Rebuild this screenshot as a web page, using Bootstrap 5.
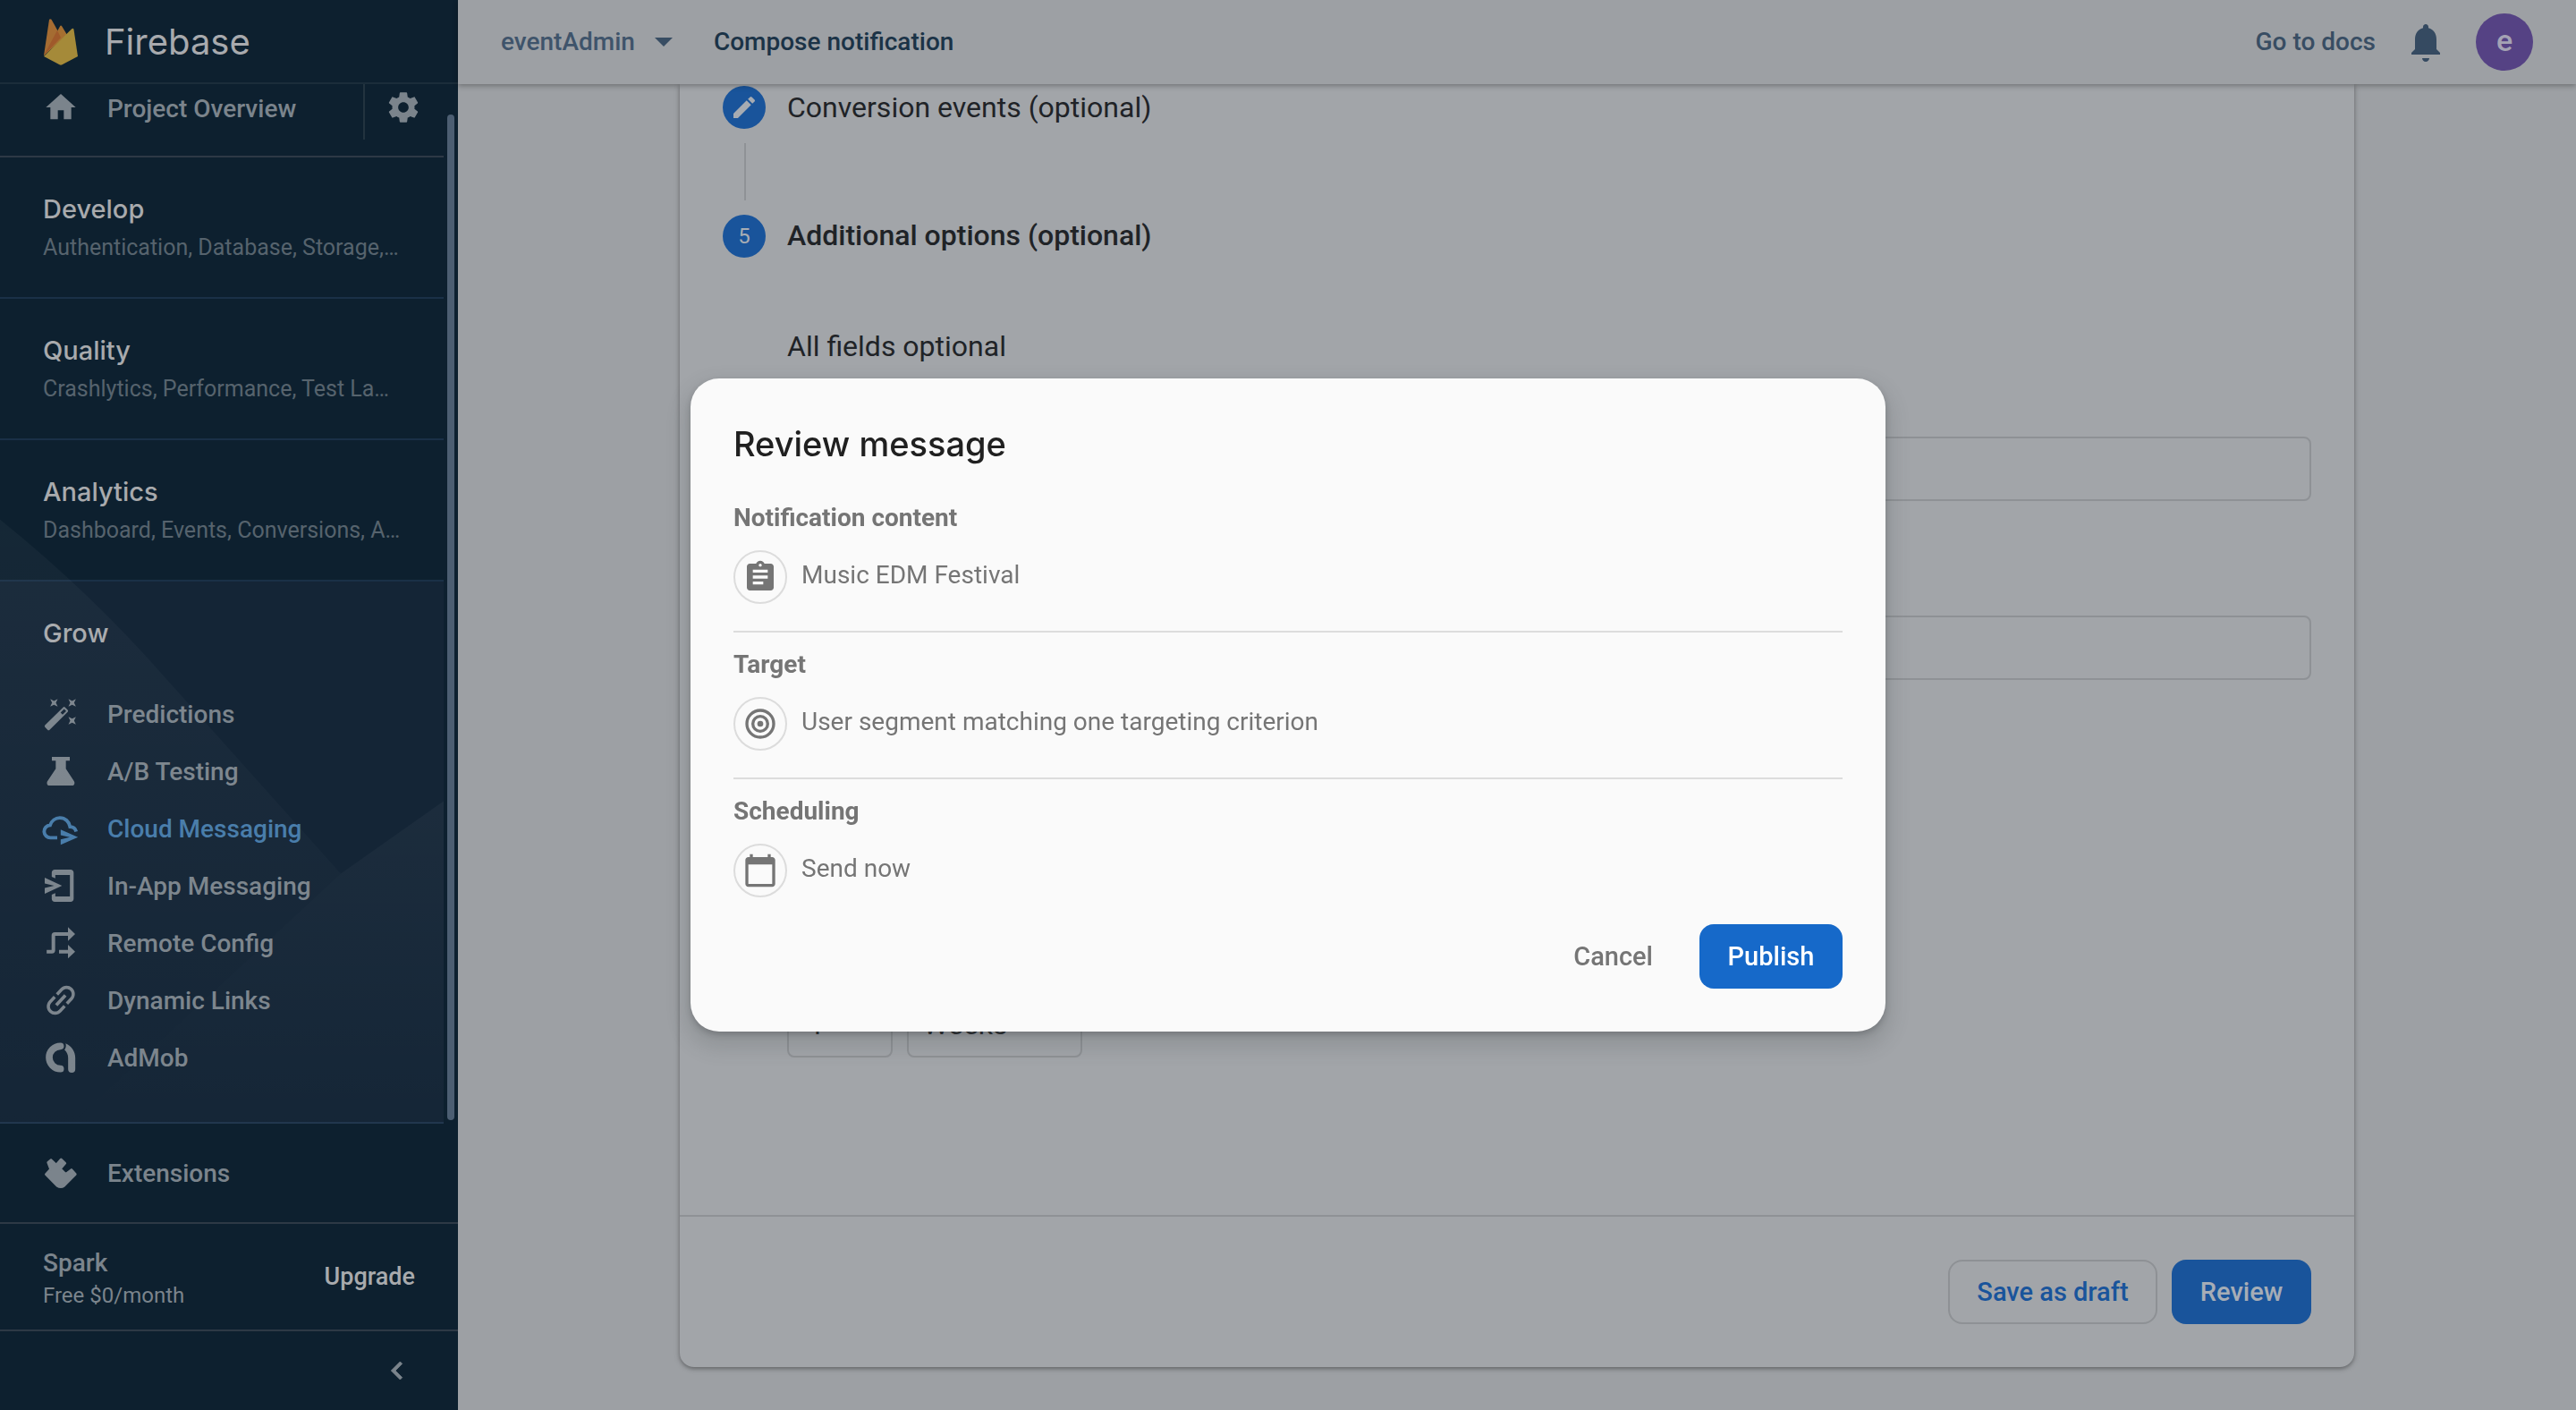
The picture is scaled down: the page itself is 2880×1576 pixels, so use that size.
<!DOCTYPE html>
<html lang="en">
<head>
<meta charset="utf-8">
<meta name="viewport" content="width=device-width, initial-scale=1">
<title>Compose notification</title>
<link href="https://cdn.jsdelivr.net/npm/bootstrap@5.3.0/dist/css/bootstrap.min.css" rel="stylesheet">
<style>
body{font-family:Roboto,"Liberation Sans",sans-serif;font-size:28px;line-height:32px;background:#9da0a4;color:#202327;overflow:hidden}
a{text-decoration:none;color:inherit}
svg{display:block;flex:none}
.ico{width:40px;height:40px;fill:currentColor}
.medium{font-weight:500}
.display-font{font-family:Inter,"Liberation Sans",sans-serif}
/* sidebar */
.side{width:512px;flex:none;background:#0d202f;color:#7b848c}
.side-brand{height:94px;padding:2px 0 0 49px;gap:30px;border-bottom:2px solid #1b2d3a;color:#a8aaae;font-size:40px;line-height:48px}
.side-list{min-width:0}
.side-home{height:82px;border-bottom:2px solid #2d3945}
.side-home a{padding:6px 0 0 48px;gap:32px}
.side-home a span,.side-ext span,.side-item span{line-height:40px;padding-top:2px}
.side-gear{margin-left:auto;height:62px;width:90px;padding:0 0 10px 23px;border:0;border-left:2px solid #22333f;background:none;color:inherit}
.side-group{display:block;height:158px;padding:37px 48px 0;border-bottom:2px solid #1a3047}
.side-title{font-size:29px;line-height:42px;color:#a8aaad;font-weight:500;margin:0}
.side-sub{font-size:25px;line-height:32px;margin-top:6px;color:#56636d;white-space:nowrap}
.side-grow{background:#142536;padding:37px 0 0;border-bottom:2px solid #20364d}
.side-grow .side-title{padding-left:48px;margin-bottom:37px}
.side-item{height:64px;padding-left:48px;gap:32px}
.side-item.on{color:#467ba9}
.side-rail{width:16px;flex:none;padding:34px 4px 4px}
.side-thumb{background:#4c5e72;border-radius:4px;width:8px;height:100%}
.side-art{position:absolute;left:0;top:0;width:496px;height:100%;pointer-events:none}
.side-ext{height:112px;padding-left:48px;gap:32px;border-bottom:2px solid #2d3945}
.side-plan{height:120px;padding:0 48px;border-bottom:2px solid #2d3945}
.plan-name{padding-top:6px;gap:4px}
.plan-name small{font-size:24px;line-height:32px}
.side-plan a{font-size:27px;color:#a8aaad}
.side-fold{height:88px;padding-right:48px}
.side-fold button{border:0;background:none;padding:0;color:inherit}
/* top bar */
.topbar{height:94px;padding:0 48px;color:#384d63;box-shadow:0 2px 6px rgba(0,0,0,.3);z-index:2;background:#9da0a4}
.crumb-project{gap:22px;margin-right:46px;border:0;background:none;padding:0;color:#3f546b}
.crumb-page{font-size:28px;line-height:32px;color:#1b3347}
.bell{margin:0 32px}
.avatar{width:64px;height:64px;background:#554284;color:#a5a3b4;font-size:34px;border:0;padding:0 0 4px}
/* page card */
.sheet{width:100%;max-width:1872px;margin:0 auto 48px;background:#a2a5a9;border-radius:0 0 16px 16px;box-shadow:0 2px 4px rgba(0,0,0,.3),0 1px 8px rgba(0,0,0,.12)}
.sheet-body{padding:2px 48px 0;font-size:32px;line-height:40px}
.step{gap:24px;height:48px}
.step h2{font-size:32px;line-height:44px;margin:0;font-weight:400}
.step h2.medium{font-weight:500;padding-bottom:2px}
.dot{width:48px;height:48px;background:#19549b;color:#a8adb4;font-size:24px}
.step-line{width:2px;height:64px;margin:16px 0 16px 24px;background:#8f9296}
.fields{padding:79px 0 0 72px}
.box{height:72px;border:2px solid #8e9195;border-radius:8px;background:transparent;color:#202327;font-size:32px;padding:0 22px 2px;box-shadow:none}
.box-a{margin-top:81px}.box-b{margin-top:128px}
.expiry{margin-top:350px;gap:16px}
.w-num{width:118px}.w-unit{width:196px;appearance:none;background-image:none;padding:0 16px 2px}
.sheet-foot{padding:48px;gap:16px;border-top:2px solid #8f9296}
.act{height:72px;border-radius:16px;font-size:29px;line-height:32px;font-weight:500;padding:0 30px;border-width:2px}
.act-line{border-color:#8e9195;color:#19549b;width:234px}
.act-dim{background:#19549b;color:#a6adb6;width:156px}
.act-main{background:#1669c9;color:#fff;width:160px}
.act-text{color:#757575}
.act-line,.act-dim,.act-main{padding:0}
/* dialog */
.review .modal-dialog{max-width:1336px}
.review .modal-content{background:#fafafa;border:0;border-radius:32px;padding:48px;color:#757575;box-shadow:0 4px 6px rgba(60,64,67,.3),0 12px 20px 8px rgba(60,64,67,.15)}
.review h1{font-size:38px;line-height:50px;margin:0 0 22px;color:#202020;font-weight:500}
.part{padding:20px 0 30px;border-bottom:2px solid #dcdcdc}
.part:last-of-type{border-bottom:0}
.part h2{font-size:28px;line-height:32px;font-weight:700;margin:0 0 20px}
.part-row{gap:16px}
.part-row span{padding-bottom:4px}
.ring{width:60px;height:60px;border:2px solid #dcdcdc}
.actions{gap:20px}
</style>
</head>
<body>
<div class="d-flex vh-100">
  <aside class="side d-flex flex-column position-relative">
    <header class="side-brand display-font d-flex align-items-center">
      <svg width="38" height="52" viewBox="0 0 38 52" aria-hidden="true">
        <path d="M0 41 6 1Q7-.6 8.500 .8L17 16 13 29z" fill="#a56c32"/>
        <path d="M0 41 18 8.500Q19 6.500 20.300 8.500L26 18z" fill="#a66f31"/>
        <path d="M0 41 15 13 19 21z" fill="#9f592b"/>
        <path d="M0 42 31 11.500Q33 10 33.500 12L38 42 20.500 51.300Q19 52 17.500 51.300z" fill="#a58a39"/>
      </svg>
      <span>Firebase</span>
    </header>
    <nav class="d-flex flex-grow-1 position-relative medium" aria-label="Project">
      <div class="side-list flex-grow-1 d-flex flex-column">
        <div class="side-home d-flex align-items-start">
          <a href="#" class="d-flex"><svg class="ico" viewBox="0 0 24 24"><path d="M10 20v-6h4v6h5v-8h3L12 3 2 12h3v8z"/></svg><span>Project Overview</span></a>
          <button class="side-gear" type="button" aria-label="Settings"><svg class="ico" viewBox="0 0 24 24"><path d="M19.430 12.980c.04-.32.070-.640.070-.980s-.03-.66-.07-.98l2.110-1.650c.19-.15.24-.42.120-.64l-2-3.460c-.12-.22-.39-.3-.61-.22l-2.490 1c-.52-.4-1.080-.73-1.690-.98l-.38-2.650C14.460 2.180 14.250 2 14 2h-4c-.25 0-.46.180-.49.420l-.38 2.650c-.61.250-1.170.590-1.690.980l-2.490-1c-.23-.09-.49 0-.61.220l-2 3.460c-.13.220-.07.490.120.640l2.110 1.650c-.04.320-.07.650-.07.980s.030.660.070.980l-2.110 1.650c-.19.150-.24.420-.12.640l2 3.460c.12.220.390.300.610.220l2.490-1c.52.400 1.080.730 1.690.980l.38 2.650c.03.240.240.420.490.420h4c.25 0 .46-.18.490-.42l.38-2.650c.61-.25 1.170-.59 1.690-.98l2.490 1c.23.090.490 0 .61-.22l2-3.460c.12-.22.070-.49-.12-.64l-2.110-1.650zM12 15.500c-1.930 0-3.500-1.570-3.500-3.500s1.570-3.500 3.500-3.500 3.500 1.570 3.500 3.500-1.570 3.500-3.500 3.500z"/></svg></button>
        </div>
        <a href="#" class="side-group"><h2 class="side-title display-font">Develop</h2><div class="side-sub fw-normal">Authentication, Database, Storage,…</div></a>
        <a href="#" class="side-group"><h2 class="side-title display-font">Quality</h2><div class="side-sub fw-normal">Crashlytics, Performance, Test La…</div></a>
        <a href="#" class="side-group"><h2 class="side-title display-font">Analytics</h2><div class="side-sub fw-normal">Dashboard, Events, Conversions, A…</div></a>
        <section class="side-grow flex-grow-1">
          <h2 class="side-title display-font">Grow</h2>
          <a href="#" class="side-item d-flex align-items-center"><svg class="ico" viewBox="0 0 24 24"><path fill-rule="evenodd" d="M13.500 7.600Q14.200 6.900 14.900 7.600L16.600 9.300Q17.200 10 16.600 10.700L4.500 22.600Q3.800 23.200 3.100 22.600L1.400 20.900Q.8 20.200 1.400 19.500zM14.200 8.700 11.800 11.100 13.200 12.500 15.600 10.100z"/><path d="M4.900 2l2.500 1.300L9.900 2 8.700 4.500 9.900 7 7.400 5.800 4.900 7 6.100 4.500zM17.100 2l2.500 1.300L22.100 2l-1.200 2.500L22.100 7l-2.500-1.200L17.100 7l1.200-2.500zM17.100 14l2.500 1.200L22.100 14l-1.200 2.500 1.200 2.500-2.500-1.200-2.500 1.200 1.200-2.500z"/></svg><span>Predictions</span></a>
          <a href="#" class="side-item d-flex align-items-center"><svg class="ico" viewBox="0 0 24 24"><path d="M6 2.400h12v2.500h-2.600v5.500l5.500 8.300c.7 1.300.1 2.900-1.300 2.900H4.300c-1.400 0-2-1.600-1.300-2.900l5.600-8.300V4.900H6z"/></svg><span>A/B Testing</span></a>
          <a href="#" class="side-item on d-flex align-items-center" aria-current="page"><svg class="ico" viewBox="0 0 24 24" overflow="visible"><path d="M9.600 18.200H5.200a4.200 4.200 0 0 1-.4-8.400C5.800 6.900 8.300 4.900 11.300 4.900c3.700 0 6.300 2.600 6.900 6 2.300.1 3.600 1.200 4.100 3.200" fill="none" stroke="currentColor" stroke-width="2.300"/><path d="M11.900 12.800l11.600 5.100-11.600 5v-3.600l6.100-1.400-6.100-1.400z"/></svg><span>Cloud Messaging</span></a>
          <a href="#" class="side-item d-flex align-items-center"><svg class="ico" viewBox="0 0 24 24"><path d="M5.900 6V3.200c0-1.100.9-2 2-2h10.700c1.100 0 2 .9 2 2v17.600c0 1.100-.9 2-2 2H7.900c-1.100 0-2-.9-2-2V18l2.400-1v2.200h9.800V4.800H8.300V7z"/><path d="M1.200 6.600 12.800 12 1.200 17.400v-3.900L7.500 12l-6.300-1.500z"/></svg><span>In-App Messaging</span></a>
          <a href="#" class="side-item d-flex align-items-center"><svg class="ico" viewBox="0 0 24 24"><path d="M2.500 17.800H6q1 0 1-1V7q0-1 1-1h9M10.800 17.800H17" fill="none" stroke="currentColor" stroke-width="2.400"/><path d="M16.800 1.400 21.600 6l-4.800 4.600zM16.800 13.200l4.800 4.600-4.800 4.600z"/></svg><span>Remote Config</span></a>
          <a href="#" class="side-item d-flex align-items-center"><svg class="ico" viewBox="0 0 24 24"><g transform="translate(12 12) rotate(-47) scale(1.120) translate(-12 -12)"><path d="M3.900 12c0-1.710 1.390-3.100 3.100-3.100h4V7H7c-2.760 0-5 2.240-5 5s2.240 5 5 5h4v-1.900H7c-1.710 0-3.100-1.390-3.100-3.100zM8 13h8v-2H8v2zm9-6h-4v1.900h4c1.710 0 3.100 1.390 3.100 3.100s-1.390 3.100-3.100 3.100h-4V17h4c2.760 0 5-2.240 5-5s-2.240-5-5-5z"/></g></svg><span>Dynamic Links</span></a>
          <a href="#" class="side-item d-flex align-items-center"><svg class="ico" viewBox="0 0 24 24"><path d="M11.800 4.400A7.600 7.600 0 0 0 11.800 19.600" fill="none" stroke="currentColor" stroke-width="4.600" stroke-linecap="round"/><path d="M15.200 2.600C19.200 4.300 21.700 8 21.700 12.300v7.500a2.400 2.400 0 0 1-4.800 0v-7.500c0-2.200-.9-4.100-2.400-5.400.9-1.200 1.200-2.900.7-4.300z"/></svg><span>AdMob</span></a>
        </section>
      </div>
      <div class="side-rail"><div class="side-thumb"></div></div>
      <svg class="side-art" viewBox="0 0 496 1160" preserveAspectRatio="none" aria-hidden="true">
        <defs><linearGradient id="fade" x1="0" y1="0" x2="0" y2="1"><stop offset="0" stop-color="#fff" stop-opacity=".035"/><stop offset="1" stop-color="#fff" stop-opacity=".004"/></linearGradient></defs>
        <path d="M0 486Q100 566 188 666L381 881 80 1160H0z" fill="url(#fade)"/>
        <path d="M496 800 381 881 80 1160H496z" fill="url(#fade)"/>
      </svg>
    </nav>
    <a href="#" class="side-ext medium d-flex align-items-center"><svg class="ico" viewBox="0 0 24 24"><path stroke="currentColor" stroke-width="1.600" stroke-linejoin="round" d="M3.400 4.900 5.400 3.300 8.900 6.600 12.100 2.900 14.900 5.500 11.700 9.200 15.300 12.800 19.100 9.900 21.800 12.900 14.200 20.600Q12 22.200 9.500 20.600L2 13 5.100 9.500z"/></svg><span>Extensions</span></a>
    <div class="side-plan d-flex align-items-center justify-content-between">
      <div class="plan-name d-flex flex-column"><span class="medium">Spark</span><small>Free $0/month</small></div>
      <a href="#" class="medium">Upgrade</a>
    </div>
    <div class="side-fold d-flex align-items-center justify-content-end"><button type="button" aria-label="Collapse"><svg class="ico" viewBox="0 0 24 24"><path d="M15.410 7.410 14 6l-6 6 6 6 1.410-1.410L10.830 12z" stroke="currentColor" stroke-width=".5"/></svg></button></div>
  </aside>

  <div class="d-flex flex-column flex-grow-1">
    <header class="topbar medium d-flex align-items-center position-relative">
      <button class="crumb-project medium d-flex align-items-center" type="button">eventAdmin<svg width="20" height="10" viewBox="0 0 20 10" fill="#384d63"><path d="M0 0h20L10 10z"/></svg></button>
      <span class="crumb-page">Compose notification</span>
      <a href="#" class="ms-auto">Go to docs</a>
      <svg width="48" height="48" viewBox="0 0 24 24" class="bell" fill="#354a61"><path d="M12 23c1.100 0 2-.9 2-2h-4c0 1.100.9 2 2 2zm6-7v-5.500c0-3.100-1.640-5.640-4.500-6.320V3.500c0-.83-.67-1.500-1.500-1.500s-1.500.67-1.500 1.500v.68C7.630 4.860 6 7.420 6 10.500V16l-2 2v1h16v-1z"/></svg>
      <button class="avatar rounded-circle medium" type="button">e</button>
    </header>
    <main class="d-flex flex-column flex-grow-1">
      <form class="sheet d-flex flex-column flex-grow-1">
        <div class="sheet-body flex-grow-1">
          <div class="step d-flex align-items-center"><span class="dot rounded-circle d-flex align-items-center justify-content-center"><svg width="32" height="32" viewBox="0 0 24 24" fill="#a6abb2"><path d="M3 17.250V21h3.750L17.810 9.940l-3.750-3.750zM20.710 7.040a1 1 0 0 0 0-1.410l-2.340-2.340a1 1 0 0 0-1.410 0l-1.830 1.830 3.750 3.750z"/></svg></span><h2>Conversion events (optional)</h2></div>
          <div class="step-line"></div>
          <div class="step d-flex align-items-center"><span class="dot rounded-circle d-flex align-items-center justify-content-center">5</span><h2 class="medium">Additional options (optional)</h2></div>
          <div class="fields">
            <p class="m-0">All fields optional</p>
            <input class="form-control box box-a" type="text" aria-label="Notification channel">
            <input class="form-control box box-b" type="text" aria-label="Custom data">
            <div class="expiry d-flex">
              <input class="form-control box w-num" type="text" value="1" aria-label="Expires after">
              <select class="form-select box w-unit" aria-label="Expiry unit"><option>Weeks</option></select>
            </div>
          </div>
        </div>
        <div class="sheet-foot d-flex justify-content-end">
          <button class="btn act act-line" type="button">Save as draft</button>
          <button class="btn act act-dim" type="button">Review</button>
        </div>
      </form>
    </main>
  </div>
</div>

<div class="modal review d-block" role="dialog" aria-modal="true" aria-labelledby="review-title">
  <div class="modal-dialog modal-dialog-centered">
    <div class="modal-content">
      <h1 id="review-title" class="display-font">Review message</h1>
      <section class="part"><h2>Notification content</h2><div class="part-row d-flex align-items-center"><div class="ring rounded-circle d-flex align-items-center justify-content-center"><svg class="ico" viewBox="0 0 24 24"><path d="M19 3h-4.180C14.400 1.840 13.300 1 12 1s-2.400.840-2.820 2H5c-1.100 0-2 .9-2 2v14c0 1.100.9 2 2 2h14c1.100 0 2-.9 2-2V5c0-1.100-.9-2-2-2zm-7 0c.55 0 1 .45 1 1s-.45 1-1 1-1-.45-1-1 .45-1 1-1zm2 14H7v-2h7v2zm3-4H7v-2h10v2zm0-4H7V7h10v2z"/></svg></div><span>Music EDM Festival</span></div></section>
      <section class="part"><h2>Target</h2><div class="part-row d-flex align-items-center"><div class="ring rounded-circle d-flex align-items-center justify-content-center"><svg class="ico" viewBox="0 0 24 24"><g fill="none" stroke="currentColor" stroke-width="2"><circle cx="12" cy="12" r="9"/><circle cx="12" cy="12" r="5"/></g><circle cx="12" cy="12" r="2"/></svg></div><span>User segment matching one targeting criterion</span></div></section>
      <section class="part"><h2>Scheduling</h2><div class="part-row d-flex align-items-center"><div class="ring rounded-circle d-flex align-items-center justify-content-center"><svg class="ico" viewBox="0 0 24 24"><path d="M20 3h-1V1h-2v2H7V1H5v2H4c-1.100 0-2 .9-2 2v16c0 1.100.9 2 2 2h16c1.100 0 2-.9 2-2V5c0-1.100-.9-2-2-2zm0 18H4V8h16v13z"/></svg></div><span>Send now</span></div></section>
      <div class="actions d-flex justify-content-end"><button class="btn act act-text" type="button">Cancel</button><button class="btn act act-main" type="button">Publish</button></div>
    </div>
  </div>
</div>
<script src="https://cdn.jsdelivr.net/npm/bootstrap@5.3.0/dist/js/bootstrap.bundle.min.js"></script>
</body>
</html>
